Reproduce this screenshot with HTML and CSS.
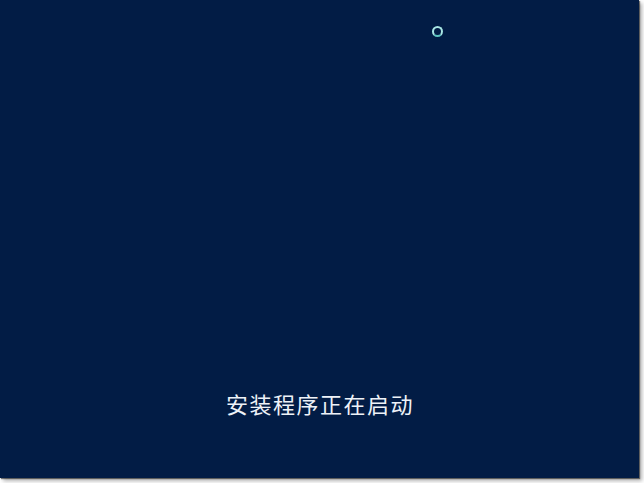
FILE: index.html
```html
<!DOCTYPE html>
<html lang="zh-CN">
<head>
<meta charset="utf-8">
<link rel="stylesheet" href="styles.css">
</head>
<body>
<div class="frame">
  <div class="spinner-row"><span class="spinner"></span></div>
  <div class="status">安装程序正在启动</div>
</div>
</body>
</html>
```
FILE: styles.css
```css
html, body {
  margin: 0;
  padding: 0;
  background: #ffffff;
}
body {
  width: 644px;
  height: 483px;
  overflow: hidden;
}
.frame {
  width: 639px;
  height: 478px;
  background: #021c45;
  box-shadow: 1px 1px 1px rgba(0,0,0,0.5), 3px 3px 4px rgba(0,0,0,0.3);
  display: flex;
  flex-direction: column;
  box-sizing: border-box;
  padding-bottom: 60px;
}
.spinner-row {
  display: flex;
  padding-top: 26px;
  padding-left: 432px;
}
.spinner {
  width: 11px;
  height: 11px;
  box-sizing: border-box;
  border-radius: 50%;
  border: 2.5px solid #a8e6e4;
  border-bottom-color: #5cc4c0;
}
.status {
  margin-top: auto;
  height: 30px;
  line-height: 30px;
  text-align: center;
  padding-left: 1px;
  font-family: "Noto Sans CJK SC", sans-serif;
  font-weight: 400;
  font-size: 22px;
  color: #eef2f8;
  letter-spacing: 1.5px;
}
```
